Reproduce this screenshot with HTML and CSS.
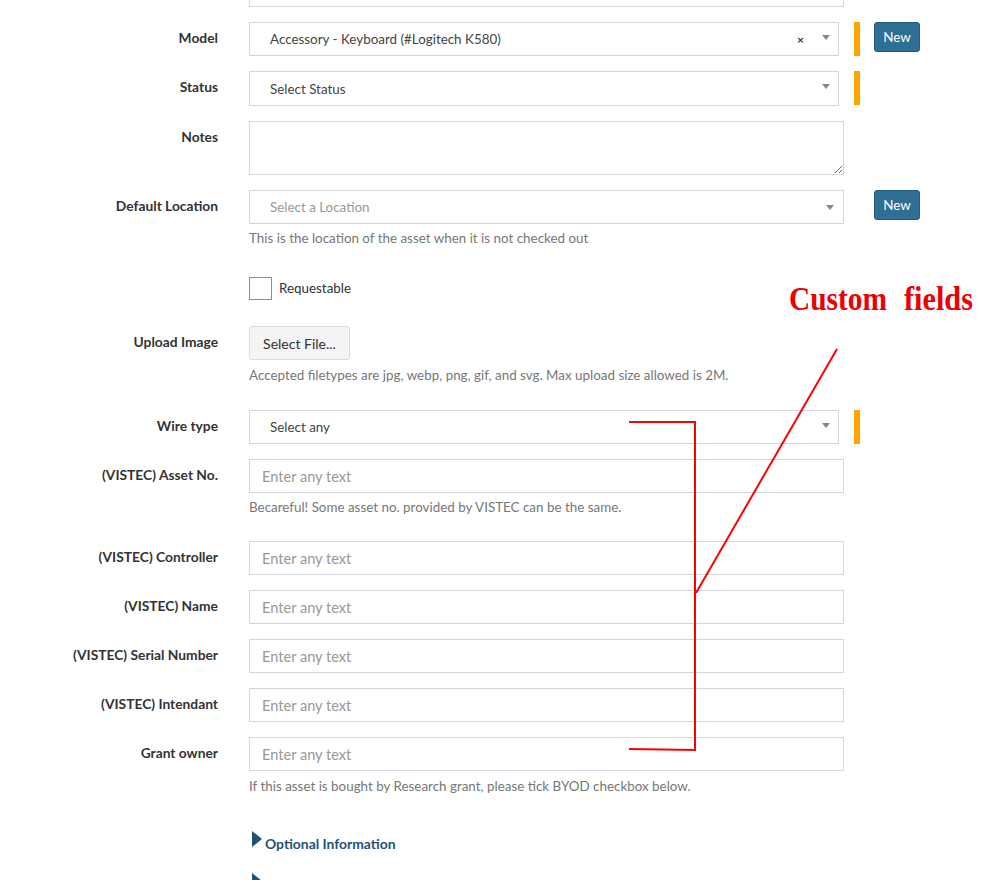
FILE: index.html
```html
<!DOCTYPE html>
<html>
<head>
<meta charset="utf-8">
<link rel="stylesheet" href="styles.css">
</head>
<body>
<div class="page">
  <form class="form">
    <div class="row row-cut">
      <div class="label"></div>
      <div class="field"><div class="input"></div></div>
    </div>

    <div class="row">
      <div class="label">Model</div>
      <div class="field field-req">
        <div class="select"><span class="sel-text">Accessory - Keyboard (#Logitech K580)</span><span class="clear">×</span><span class="arrow"></span></div>
      </div>
      <div class="extras"><span class="req-bar"></span><button type="button" class="btn-new">New</button></div>
    </div>

    <div class="row">
      <div class="label">Status</div>
      <div class="field field-req">
        <div class="select select-tall"><span class="sel-text">Select Status</span><span class="arrow"></span></div>
      </div>
      <div class="extras"><span class="req-bar req-bar-tall"></span></div>
    </div>

    <div class="row">
      <div class="label">Notes</div>
      <div class="field"><textarea class="textarea"></textarea></div>
    </div>

    <div class="row row-help-loc">
      <div class="label">Default Location</div>
      <div class="field">
        <div class="select"><span class="sel-text placeholder">Select a Location</span><span class="arrow arrow-far"></span></div>
        <p class="help">This is the location of the asset when it is not checked out</p>
      </div>
      <div class="extras"><span class="req-bar req-none"></span><button type="button" class="btn-new">New</button></div>
    </div>

    <div class="row row-check">
      <div class="label"></div>
      <div class="field">
        <label class="check"><span class="box"></span><span class="check-text">Requestable</span></label>
      </div>
    </div>

    <div class="row row-help-up">
      <div class="label">Upload Image</div>
      <div class="field">
        <button type="button" class="btn-file">Select File...</button>
        <p class="help help-5">Accepted filetypes are jpg, webp, png, gif, and svg. Max upload size allowed is 2M.</p>
      </div>
    </div>

    <div class="row">
      <div class="label">Wire type</div>
      <div class="field field-req">
        <div class="select"><span class="sel-text">Select any</span><span class="arrow"></span></div>
      </div>
      <div class="extras"><span class="req-bar"></span></div>
    </div>

    <div class="row row-help-asset">
      <div class="label">(VISTEC) Asset No.</div>
      <div class="field">
        <div class="input"><span class="placeholder">Enter any text</span></div>
        <p class="help">Becareful! Some asset no. provided by VISTEC can be the same.</p>
      </div>
    </div>

    <div class="row">
      <div class="label">(VISTEC) Controller</div>
      <div class="field"><div class="input"><span class="placeholder">Enter any text</span></div></div>
    </div>
    <div class="row">
      <div class="label">(VISTEC) Name</div>
      <div class="field"><div class="input"><span class="placeholder">Enter any text</span></div></div>
    </div>
    <div class="row">
      <div class="label">(VISTEC) Serial Number</div>
      <div class="field"><div class="input"><span class="placeholder">Enter any text</span></div></div>
    </div>
    <div class="row">
      <div class="label">(VISTEC) Intendant</div>
      <div class="field"><div class="input"><span class="placeholder">Enter any text</span></div></div>
    </div>
    <div class="row row-help-grant">
      <div class="label">Grant owner</div>
      <div class="field">
        <div class="input"><span class="placeholder">Enter any text</span></div>
        <p class="help help-5">If this asset is bought by Research grant, please tick BYOD checkbox below.</p>
      </div>
    </div>

    <div class="row row-opt">
      <div class="label"></div>
      <div class="field">
        <div class="toggle"><span class="tri"></span><span class="toggle-text">Optional Information</span></div>
        <div class="toggle toggle-next"><span class="tri"></span></div>
      </div>
    </div>
  </form>

  <svg class="annot" width="999" height="880" viewBox="0 0 999 880">
    <text x="789" y="310" class="annot-text" textLength="98" lengthAdjust="spacingAndGlyphs">Custom</text>
    <text x="904" y="310" class="annot-text" textLength="69" lengthAdjust="spacingAndGlyphs">fields</text>
    <polyline points="629,422 695,422 695,750 629,749" fill="none" stroke="#ff0000" stroke-width="2"/>
    <line x1="837" y1="349" x2="696" y2="593" stroke="#ff0000" stroke-width="2"/>
  </svg>
</div>
</body>
</html>
```

FILE: styles.css
```css
* { box-sizing: border-box; }
html, body { margin: 0; padding: 0; background: #fff; }
body {
  font-family: "Lato", "Open Sans", sans-serif;
  font-size: 13px;
  color: #333;
  overflow: hidden;
  height: 880px;
}
.page { position: relative; width: 999px; height: 880px; overflow: hidden; }
.form { margin: -27px 0 0 0; }

.row {
  display: grid;
  grid-template-columns: 218px 595px auto;
  column-gap: 31px;
  margin-bottom: 15px;
  align-items: start;
}
.row-cut { margin-bottom: 15px; }
.label {
  text-align: right;
  font-weight: 700;
  font-size: 13.8px;
  line-height: 32px;
  color: #333;
  white-space: nowrap;
}
.field { min-width: 0; }
.field-req .select { width: 590px; }

.input, .select {
  height: 34px;
  border: 1px solid #d2d6de;
  background: #fff;
  display: flex;
  align-items: center;
  position: relative;
}
.input { padding-left: 12px; }
.select { padding-left: 20px; color: #444; font-size: 13.4px; }
.select-tall { height: 35px; }
.placeholder { color: #999; font-size: 14.6px; }
.sel-text.placeholder { font-size: 13.4px; }
.sel-text { flex: 1; }
.clear {
  font-weight: 700;
  font-size: 12px;
  color: #333;
  margin-right: 34px;
  line-height: 1;
  margin-top: 2px;
}
.arrow {
  width: 0; height: 0;
  border-left: 4px solid transparent;
  border-right: 4px solid transparent;
  border-top: 5px solid #888;
  position: absolute;
  right: 8px;
  top: 12px;
}
.arrow-far { right: 9px; top: 14px; }

.extras {
  display: flex;
  align-items: flex-start;
  margin-left: -21px;
}
.req-bar {
  width: 6px;
  height: 34px;
  background: #ffa500;
  flex: none;
}
.req-bar-tall { height: 34px; }
.req-none { background: transparent; }
.btn-new {
  margin-left: 14px;
  width: 46px;
  height: 30px;
  background: #2f6f94;
  border: 1px solid #255a79;
  border-radius: 3px;
  color: #fff;
  font-family: inherit;
  font-size: 13.4px;
  padding: 0;
}

.textarea {
  display: block;
  width: 595px;
  height: 54px;
  border: 1px solid #d2d6de;
  resize: vertical;
  margin: 0;
  font-family: inherit;
}

.help {
  margin: 4px 0 0 0;
  font-size: 13.4px;
  line-height: 20px;
  color: #777;
}
.help-5 { margin-top: 5px; }

.row-help-loc { margin-bottom: 29px; }
.row-check { margin-bottom: 26px; }
.check { display: flex; align-items: center; gap: 7px; font-size: 13.4px; color: #333; }
.check-text { margin-top: -2px; }
.box { width: 23px; height: 23px; border: 1px solid #8d8d8d; background: #fff; display: block; }

.btn-file {
  width: 101px;
  height: 34px;
  background: #f4f4f4;
  border: 1px solid #ddd;
  border-radius: 3px;
  color: #333;
  font-family: inherit;
  font-size: 14px;
  padding: 0;
}
.row-help-up { margin-bottom: 25px; }
.row-help-asset { margin-bottom: 24px; }
.row-help-grant { margin-bottom: 34px; }

.toggle { display: flex; align-items: flex-start; height: 26px; }
.tri {
  width: 0; height: 0;
  border-top: 8px solid transparent;
  border-bottom: 8px solid transparent;
  border-left: 10px solid #1f5276;
  margin-left: 3px;
  margin-top: 1px;
}
.toggle-text {
  margin-left: 3px;
  margin-top: 5px;
  font-weight: 700;
  font-size: 13.9px;
  color: #1f5276;
}
.toggle-next { margin-top: 16px; }

.annot { position: absolute; left: 0; top: 0; pointer-events: none; }
.annot-text {
  font-family: "Liberation Serif", serif;
  font-weight: 700;
  font-size: 34px;
  fill: #ee0000;
}
```
